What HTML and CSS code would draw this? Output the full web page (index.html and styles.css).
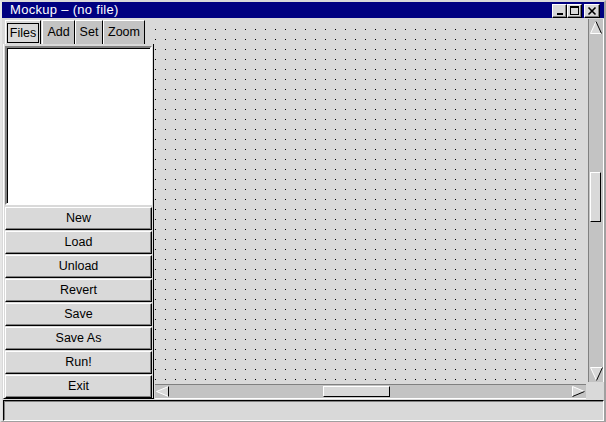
FILE: index.html
```html
<!DOCTYPE html>
<html>
<head>
<meta charset="utf-8">
<link rel="stylesheet" href="styles.css">
</head>
<body>
<div class="window">
  <div class="titlebar">
    <span class="title">Mockup – (no file)</span>
    <div class="tb-buttons">
      <span class="tbtn"><svg width="13" height="12" viewBox="0 0 13 12" shape-rendering="crispEdges"><rect x="4" y="8" width="6" height="2" fill="#000"/></svg></span>
      <span class="tbtn"><svg width="13" height="12" viewBox="0 0 13 12" shape-rendering="crispEdges"><rect x="2" y="1" width="9" height="2" fill="#000"/><rect x="2" y="1" width="1" height="9" fill="#000"/><rect x="10" y="1" width="1" height="9" fill="#000"/><rect x="2" y="9" width="9" height="1" fill="#000"/></svg></span>
      <span class="tbtn close"><svg width="14" height="12" viewBox="0 0 14 12"><path d="M3.5 2.5 L10.5 9.5 M10.5 2.5 L3.5 9.5" stroke="#000" stroke-width="1.6"/></svg></span>
    </div>
  </div>
  <div class="main">
    <div class="left">
      <div class="tabs">
        <div class="tab active w-files"><span class="focus">Files</span></div>
        <div class="tab w-add">Add</div>
        <div class="tab w-set">Set</div>
        <div class="tab w-zoom">Zoom</div>
      </div>
      <div class="panel">
        <div class="listbox"></div>
        <div class="buttons">
          <div class="btn">New</div>
          <div class="btn">Load</div>
          <div class="btn">Unload</div>
          <div class="btn">Revert</div>
          <div class="btn">Save</div>
          <div class="btn">Save As</div>
          <div class="btn">Run!</div>
          <div class="btn last">Exit</div>
        </div>
      </div>
    </div>
    <div class="canvas-area">
      <div class="canvas">
        <svg class="dots" width="430" height="352" shape-rendering="crispEdges">
          <defs><pattern id="dotp" width="10" height="10" patternUnits="userSpaceOnUse"><rect width="1" height="1" fill="#000"/></pattern></defs>
          <rect width="430" height="352" fill="url(#dotp)"/>
        </svg>
      </div>
      <div class="vscroll">
        <svg class="arrow-up" width="12" height="13" viewBox="0 0 12 13"><polygon points="6,0.5 0.5,12.5 11.5,12.5" fill="#d9d9d9"/><path d="M6 0.5 L0.5 12.5 L11.5 12.5" stroke="#fff" fill="none"/><path d="M6 0.5 L11.5 12.5" stroke="#000" fill="none"/></svg>
        <div class="vthumb"></div>
        <svg class="arrow-down" width="13" height="14" viewBox="0 0 13 14"><polygon points="0.5,0.5 12.5,0.5 6.5,13.5" fill="#d9d9d9"/><path d="M6.5 13.5 L0.5 0.5 L12.5 0.5" stroke="#fff" fill="none"/><path d="M12.5 0.5 L6.5 13.5" stroke="#000" fill="none"/></svg>
      </div>
      <div class="hscroll">
        <svg class="arrow-left" width="13" height="11" viewBox="0 0 13 11"><polygon points="0.5,5.5 12.5,0.5 12.5,10.5" fill="#d9d9d9"/><path d="M12.5 0.5 L0.5 5.5 L12.5 10.5" stroke="#fff" fill="none"/><path d="M12.5 0.5 L12.5 10.5" stroke="#000" fill="none"/></svg>
        <div class="hthumb"></div>
        <svg class="arrow-right" width="13" height="11" viewBox="0 0 13 11"><polygon points="0.5,0.5 12.5,5.5 0.5,10.5" fill="#d9d9d9"/><path d="M0.5 10.5 L0.5 0.5 L12.5 5.5" stroke="#fff" fill="none"/><path d="M12.5 5.5 L0.5 10.5" stroke="#000" fill="none"/></svg>
      </div>
      <div class="corner"></div>
    </div>
  </div>
  <div class="status"></div>
</div>
</body>
</html>
```
FILE: styles.css
```css
* { box-sizing: border-box; }
html, body { margin: 0; padding: 0; }
body {
  width: 606px;
  height: 422px;
  overflow: hidden;
  background: #d9d9d9;
  font-family: "Liberation Sans", Arial, sans-serif;
  font-size: 12.5px;
  color: #000;
}
.window {
  width: 606px;
  height: 422px;
  display: flex;
  flex-direction: column;
  border-style: solid;
  border-width: 2px 2px 1px 2px;
  border-color: #d9d9d9 #a0a0a0 #a0a0a0 #e6e6e6;
}
.titlebar {
  height: 16px;
  flex: none;
  background: #000080;
  color: #fff;
  display: flex;
  align-items: flex-start;
  padding-left: 8px;
  font-size: 13px;
  letter-spacing: 0.3px;
}
.title { line-height: 16px; }
.tb-buttons {
  margin-left: auto;
  margin-top: 2px;
  margin-right: 4px;
  display: flex;
}
.tbtn {
  width: 15px;
  height: 14px;
  background: #d9d9d9;
  border: 1px solid;
  border-color: #fff #000 #000 #fff;
  box-shadow: inset -1px -1px 0 #808080;
  display: flex;
  align-items: flex-start;
  justify-content: flex-start;
}
.tbtn svg { display: block; }
.tbtn.close { width: 16px; margin-left: 2px; }

.main {
  height: 381px;
  flex: none;
  display: flex;
}
.left {
  width: 153px;
  flex: none;
  display: flex;
  flex-direction: column;
  padding-top: 2px;
}
.tabs {
  display: flex;
  height: 24px;
  flex: none;
  padding-left: 3px;
  align-items: flex-end;
}
.tab {
  height: 24px;
  border: 1px solid;
  border-bottom: none;
  border-color: #fff #000 #000 #fff;
  background: #c3c3c3;
  text-align: center;
  line-height: 23px;
}
.tab.active {
  background: #d9d9d9;
  display: flex;
  align-items: center;
  justify-content: center;
}
.focus {
  display: block;
  border: 1px solid #000;
  width: 32px;
  height: 20px;
  line-height: 18px;
  text-align: center;
}
.w-files { width: 36px; margin-right: 1px; }
.w-add { width: 33px; }
.w-set { width: 28px; }
.w-zoom { width: 42px; }

.panel {
  flex: 1;
  width: 151px;
  margin-left: 1px;
  display: flex;
  flex-direction: column;
  border-left: 1px solid #fff;
  border-right: 1px solid #000;
  border-bottom: 1px solid #000;
  padding: 2px 1px 0 1px;
}
.listbox {
  height: 159px;
  flex: none;
  background: #fff;
  border: 2px solid;
  border-color: #808080 #fff #fff #808080;
  box-shadow: inset 1px 1px 0 #000;
}
.buttons {
  margin-top: 2px;
  display: flex;
  flex-direction: column;
}
.btn {
  height: 23px;
  margin-bottom: 1px;
  background: #d9d9d9;
  border: 1px solid;
  border-color: #fff #000 #000 #fff;
  box-shadow: inset -1px -1px 0 #808080;
  text-align: center;
  line-height: 21px;
}
.btn.last { margin-bottom: 0; }

.canvas-area {
  flex: 1;
  display: grid;
  grid-template-columns: 433px 16px;
  grid-template-rows: 366px 15px;
}
.canvas {
  grid-row: 1;
  grid-column: 1;
  background: #d9d9d9;
  padding-top: 11px;
}
.dots { display: block; }

.vscroll {
  grid-row: 1;
  grid-column: 2;
  margin: 1px 0 2px 0;
  background: #c3c3c3;
  border-left: 1px solid #808080;
  border-right: 1px solid #fff;
  display: flex;
  flex-direction: column;
  align-items: center;
  padding: 2px 0 1px 0;
}
.vscroll svg { display: block; flex: none; }
.arrow-up { margin-right: 1px; }
.vthumb {
  width: 11px;
  height: 50px;
  margin-top: 138px;
  margin-right: 2px;
  background: #d9d9d9;
  border: 1px solid;
  border-color: #fff #000 #000 #fff;
}
.arrow-down { margin-top: auto; }

.hscroll {
  grid-row: 2;
  grid-column: 1;
  width: 431px;
  background: #c3c3c3;
  border-top: 1px solid #808080;
  border-bottom: 1px solid #fff;
  display: flex;
  align-items: center;
  padding: 0 1px;
}
.hscroll svg { display: block; flex: none; }
.hthumb {
  width: 67px;
  height: 11px;
  margin-left: 154px;
  background: #d9d9d9;
  border: 1px solid;
  border-color: #fff #000 #000 #fff;
}
.arrow-right { margin-left: auto; }
.corner { grid-row: 2; grid-column: 2; background: #d9d9d9; }

.status {
  height: 21px;
  flex: none;
  margin: 1px 0 0 1px;
  border: 1px solid;
  border-color: #000 #fff #fff #000;
  box-shadow: inset 1px 1px 0 #808080;
}
```
